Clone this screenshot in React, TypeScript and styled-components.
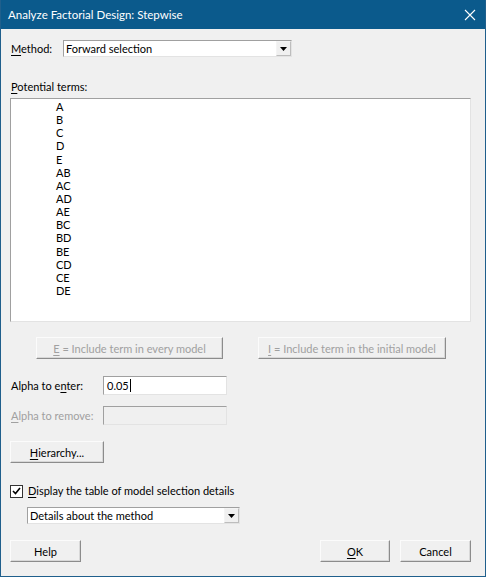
import * as React from 'react'
import styled, {createGlobalStyle} from 'styled-components'

const GlobalStyle = createGlobalStyle`
  html, body {
    margin: 0;
    padding: 0;
    background: #f0f0f0;
  }
  body {
    font-family: Lato, "Noto Sans", "DejaVu Sans", sans-serif;
    font-size: 11px;
    color: #000;
  }
`

const terms = ['A', 'B', 'C', 'D', 'E', 'AB', 'AC', 'AD', 'AE', 'BC', 'BD', 'BE', 'CD', 'CE', 'DE']

const Window = styled.div`
  width: 486px;
  height: 577px;
  box-sizing: border-box;
  border: 1px solid #1f5f8c;
  border-top: none;
  background: #f0f0f0;
  display: flex;
  flex-direction: column;
  overflow: hidden;
`

const TitleBar = styled.div`
  height: 29px;
  flex: none;
  background: #0b5a8c;
  color: #fff;
  display: flex;
  align-items: center;
  justify-content: space-between;
  padding: 0 9px 0 7px;
  font-size: 11.5px;
`

const CloseGlyph = styled.svg`
  width: 12px;
  height: 12px;
`

const Body = styled.div`
  flex: 1;
  display: flex;
  flex-direction: column;
  padding: 11px 14px 0 8px;
`

const Row = styled.div<{$top?: number; $left?: number; $gap?: number}>`
  display: flex;
  align-items: center;
  margin-top: ${p => p.$top ?? 0}px;
  margin-left: ${p => p.$left ?? 0}px;
  gap: ${p => p.$gap ?? 0}px;
`

const Label = styled.span<{$width?: number; $disabled?: boolean}>`
  width: ${p => (p.$width ? `${p.$width}px` : 'auto')};
  flex: none;
  color: ${p => (p.$disabled ? '#a0a0a0' : '#000')};
  line-height: 16px;
  white-space: nowrap;
`

const Key = styled.span`
  text-decoration: underline;
  text-underline-offset: 2px;
`

const Combo = styled.div<{$width: number}>`
  width: ${p => p.$width}px;
  height: 17px;
  box-sizing: border-box;
  background: #fff;
  border: 1px solid #e3e3e3;
  border-top-color: #a0a0a0;
  border-left-color: #a0a0a0;
  display: flex;
  align-items: center;
  padding-left: 2px;
  line-height: 15px;
`

const ComboText = styled.span`
  flex: 1;
  white-space: nowrap;
`

const ComboArrow = styled.div`
  width: 15px;
  height: 15px;
  box-sizing: border-box;
  border: 1px solid #bdbdbd;
  border-top-color: #f4f4f4;
  border-left-color: #f4f4f4;
  background: #f0f0f0;
  display: flex;
  align-items: center;
  justify-content: center;
`

const ListBox = styled.div`
  margin-top: 3px;
  margin-left: 1px;
  height: 224px;
  box-sizing: border-box;
  background: #fff;
  border: 1px solid #a0a0a0;
  border-right-color: #e3e3e3;
  border-bottom-color: #e3e3e3;
  padding: 1px 0 0 45px;
`

const Term = styled.div`
  line-height: 13.15px;
  height: 13.15px;
`

const Button = styled.button<{$width: number; $disabled?: boolean}>`
  width: ${p => p.$width}px;
  height: 22px;
  flex: none;
  box-sizing: border-box;
  font: inherit;
  font-size: 11px;
  white-space: nowrap;
  color: ${p => (p.$disabled ? '#a0a0a0' : '#000')};
  background: #f0f0f0;
  border: 1px solid #fbfbfb;
  border-right-color: #8c8c8c;
  border-bottom-color: #8c8c8c;
  box-shadow: inset -1px -1px 0 #d8d8d8;
  padding: 0;
  cursor: default;
`

const TextInput = styled.div<{$disabled?: boolean}>`
  width: 124px;
  height: 19px;
  box-sizing: border-box;
  background: ${p => (p.$disabled ? '#f0f0f0' : '#fff')};
  border: 1px solid #e3e3e3;
  border-top-color: #a0a0a0;
  border-left-color: #a0a0a0;
  padding-left: 3px;
  line-height: 17px;
  display: flex;
  align-items: center;
`

const Caret = styled.span`
  display: inline-block;
  width: 1px;
  height: 13px;
  background: #000;
  margin-left: 1px;
`

const CheckBox = styled.div`
  width: 13px;
  height: 13px;
  flex: none;
  box-sizing: border-box;
  border: 1px solid #333;
  background: #fff;
  display: flex;
  align-items: center;
  justify-content: center;
`

const Footer = styled.div`
  display: flex;
  align-items: center;
  gap: 10px;
  margin-top: 16px;
  margin-left: 1px;
`

const Spacer = styled.div`
  flex: 1;
`

const DownArrow = () => (
  <svg width="7" height="4" viewBox="0 0 7 4">
    <path d="M0 0h7L3.5 4z" fill="#000" />
  </svg>
)

export default function App() {
  return (
    <>
      <GlobalStyle />
      <Window>
        <TitleBar>
          <span>Analyze Factorial Design: Stepwise</span>
          <CloseGlyph viewBox="0 0 12 12">
            <path d="M1 1l10 10M11 1L1 11" stroke="#fff" strokeWidth="1.1" />
          </CloseGlyph>
        </TitleBar>
        <Body>
          <Row $left={2}>
            <Label $width={52}>
              <Key>M</Key>ethod:
            </Label>
            <Combo $width={229}>
              <ComboText>Forward selection</ComboText>
              <ComboArrow>
                <DownArrow />
              </ComboArrow>
            </Combo>
          </Row>

          <Row $top={22} $left={2}>
            <Label>
              <Key>P</Key>otential terms:
            </Label>
          </Row>
          <ListBox>
            {terms.map(t => (
              <Term key={t}>{t}</Term>
            ))}
          </ListBox>

          <Row $top={15} $left={27} $gap={35}>
            <Button $width={187} $disabled>
              <Key>E</Key> = Include term in every model
            </Button>
            <Button $width={188} $disabled>
              <Key>I</Key> = Include term in the initial model
            </Button>
          </Row>

          <Row $top={17} $left={2}>
            <Label $width={92}>
              Alpha to e<Key>n</Key>ter:
            </Label>
            <TextInput>
              0.05
              <Caret />
            </TextInput>
          </Row>
          <Row $top={11} $left={2}>
            <Label $width={92} $disabled>
              <Key>A</Key>lpha to remove:
            </Label>
            <TextInput $disabled />
          </Row>

          <Row $top={16} $left={1}>
            <Button $width={94}>
              <Key>H</Key>ierarchy...
            </Button>
          </Row>

          <Row $top={20} $left={1} $gap={5}>
            <CheckBox>
              <svg width="9" height="8" viewBox="0 0 9 8">
                <path d="M1 4l2.5 2.5L8 1" stroke="#000" strokeWidth="1.6" fill="none" />
              </svg>
            </CheckBox>
            <Label>
              <Key>D</Key>isplay the table of model selection details
            </Label>
          </Row>
          <Row $top={8} $left={18}>
            <Combo $width={213}>
              <ComboText>Details about the method</ComboText>
              <ComboArrow>
                <DownArrow />
              </ComboArrow>
            </Combo>
          </Row>

          <Footer>
            <Button $width={71}>Help</Button>
            <Spacer />
            <Button $width={70}>
              <Key>O</Key>K
            </Button>
            <Button $width={71}>Cancel</Button>
          </Footer>
        </Body>
      </Window>
    </>
  )
}
